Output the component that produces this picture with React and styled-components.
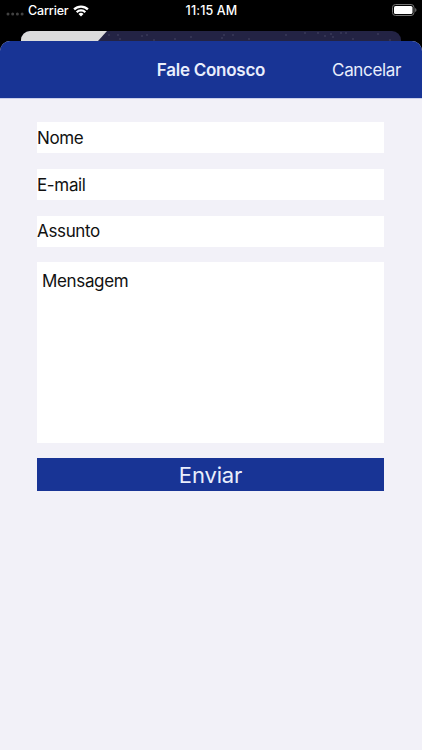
import React, { Component } from 'react';
import styled, { createGlobalStyle } from 'styled-components';

const GlobalStyle = createGlobalStyle`
  body {
    margin: 0;
    background: #000000;
    font-family: Inter, Roboto, sans-serif;
  }

  * {
    box-sizing: border-box;
  }
`;

const Screen = styled.div`
  display: flex;
  flex-direction: column;
  height: 750px;
  width: 422px;
  overflow: hidden;
  background: #000000;
`;

const StatusBar = styled.div`
  display: grid;
  grid-template-columns: 1fr auto 1fr;
  align-items: center;
  height: 31px;
  padding: 0 5px 10px 6px;
  flex-shrink: 0;
  color: #FFFFFF;
  font-size: 12.5px;
  line-height: 21px;
  font-weight: 500;
`;

const Carrier = styled.div`
  display: flex;
  align-items: center;
`;

const Dots = styled.svg`
  width: 18px;
  height: 4px;
  margin: 7px 4px 0 0;
`;

const Wifi = styled.svg`
  width: 16px;
  height: 12px;
  margin-left: 4px;
`;

const Battery = styled.svg`
  width: 25px;
  height: 12px;
  margin-bottom: 1px;
  justify-self: end;
`;

const StatusText = styled.span`
  letter-spacing: ${props => props.$spacing || '0'};
`;

const BackCard = styled.svg`
  display: block;
  width: 380px;
  height: 10px;
  margin-left: 21px;
  flex-shrink: 0;
`;

const Sheet = styled.div`
  flex: 1;
  border-radius: 10px 10px 0 0;
  overflow: hidden;
  background: #F2F1F8;
`;

const Header = styled.div`
  display: grid;
  grid-template-columns: 1fr auto 1fr;
  align-items: center;
  height: 58px;
  padding: 0 21px;
  border-bottom: 1px solid #C9CEEA;
  background: #183495;
  background-clip: padding-box;
  color: #E9EEFC;
`;

const Title = styled.h1`
  grid-column: 2;
  margin: 0;
  font-size: 17px;
  line-height: 24px;
  font-weight: 600;
  letter-spacing: -0.25px;
`;

const Cancel = styled.div`
  justify-self: end;
  font-size: 17px;
  line-height: 24px;
  letter-spacing: -0.35px;
`;

const Form = styled.div`
  display: flex;
  flex-direction: column;
  padding: 23px 38px 0 37px;
`;

const Field = styled.div`
  height: 31px;
  margin-bottom: 16px;
  background: #FFFFFF;
  color: #111111;
  font-size: 17px;
  line-height: ${props => props.$line || '33px'};
  letter-spacing: -0.35px;
`;

const Message = styled(Field)`
  height: 181px;
  margin: -1px 0 15px;
  padding: 3px 5px;
`;

const Submit = styled.div`
  height: 33px;
  background: #183495;
  color: #E9EEFC;
  font-size: 22px;
  line-height: 34px;
  text-align: center;
  letter-spacing: -0.15px;
`;

const stars = [
    [88, 4], [97, 4], [99, 8], [121, 5], [126, 4], [133, 9], [154, 8], [170, 6], [201, 7],
    [203, 4], [212, 4], [228, 8], [265, 4], [284, 2], [297, 2], [304, 5], [310, 3],
    [312, 6], [320, 2], [325, 2], [332, 8], [357, 3], [369, 9],
];

class App extends Component {
    render() {
        return (
            <Screen>
                <GlobalStyle />
                <StatusBar>
                    <Carrier>
                        <Dots viewBox="0 0 18 4">
                            {[2, 6.7, 11.4, 16.1].map(x => (
                                <circle key={x} cx={x} cy="2" r="1.5" fill="#424242" />
                            ))}
                        </Dots>
                        <StatusText $spacing="-0.15px">Carrier</StatusText>
                        <Wifi viewBox="0 0 16 12">
                            <g fill="none" stroke="#FFFFFF" strokeWidth="2.3">
                                <path d="M1.1 4.4a9.8 9.8 0 0 1 13.8 0" />
                                <path d="M3.7 7.2a6.1 6.1 0 0 1 8.6 0" />
                            </g>
                            <path d="M8 11.6L5.5 9.1a3.5 3.5 0 0 1 5 0z" fill="#FFFFFF" />
                        </Wifi>
                    </Carrier>
                    <StatusText $spacing="0.15px">11:15 AM</StatusText>
                    <Battery viewBox="0 0 25 12">
                        <rect x="0.5" y="0.5" width="21.5" height="11" rx="3" fill="none" stroke="#747474" />
                        <rect x="2" y="2" width="18.5" height="8" rx="1.6" fill="#FFFFFF" />
                        <path d="M23.2 4v4c1.7-.6 1.7-3.4 0-4z" fill="#747474" />
                    </Battery>
                </StatusBar>
                <BackCard viewBox="0 0 380 10">
                    <path d="M0 10V9a9 9 0 0 1 9-9h362a9 9 0 0 1 9 9v1z" fill="#232344" />
                    <path d="M0 10V9a9 9 0 0 1 9-9h77l-9 10z" fill="#DCDCDC" />
                    {stars.map(([x, y]) => (
                        <circle key={`${x}-${y}`} cx={x} cy={y} r="0.7" fill="#50506F" />
                    ))}
                </BackCard>
                <Sheet>
                    <Header>
                        <Title>Fale Conosco</Title>
                        <Cancel>Cancelar</Cancel>
                    </Header>
                    <Form>
                        <Field>Nome</Field>
                        <Field>E-mail</Field>
                        <Field $line="31px">Assunto</Field>
                        <Message>Mensagem</Message>
                        <Submit>Enviar</Submit>
                    </Form>
                </Sheet>
            </Screen>
        );
    }
}

export default App;
